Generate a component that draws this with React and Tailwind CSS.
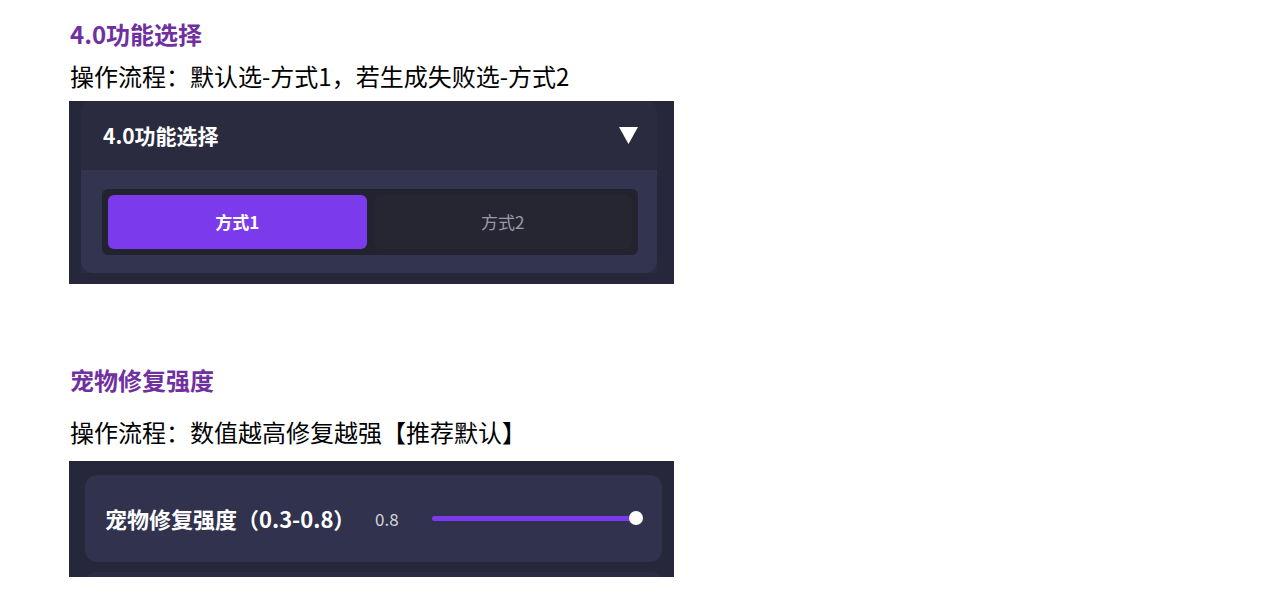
const FONT = { fontFamily: '"Noto Sans CJK SC", "Noto Sans", sans-serif' };

function ModePanel() {
  return (
    <div className="w-[605px] h-[183px] bg-[#26273a] pl-[12px] pr-[17px]">
      <div className="rounded-t-[10px] bg-[#2a2b3f]">
        {/* Header */}
        <div className="h-[69px] flex items-center justify-between pl-[22px] pr-[18px]">
          <span className="text-white text-[21px] font-bold">4.0功能选择</span>
          <svg width="21" height="19" viewBox="0 0 21 19">
            <path d="M1 1 L20 1 L10.5 18 Z" fill="#ffffff" />
          </svg>
        </div>
        {/* Body */}
        <div className="h-[103px] bg-[#33344f] rounded-b-[12px] pt-[19px] pl-[21px] pr-[19px]">
          <div className="bg-[#23232f] rounded-[6px] p-[6px] flex gap-[7px] h-[66px]">
            <button className="flex-1 rounded-[6px] bg-[#7c3aed] text-white text-[17px] font-bold">方式1</button>
            <button className="flex-1 rounded-[6px] bg-[#262633] text-[#9a9aa8] text-[17px]">方式2</button>
          </div>
        </div>
      </div>
    </div>
  );
}

function StrengthPanel() {
  return (
    <div className="w-[605px] h-[116px] bg-[#26273a] pl-[16px] pr-[12px] pt-[14px] overflow-hidden">
      <div className="h-[87px] rounded-[12px] bg-[#31324d] flex items-center pl-[20px] pr-[20px]">
        <span className="text-white text-[22px] font-bold w-[270px]">宠物修复强度（0.3-0.8）</span>
        <span className="text-[#d4d4dc] text-[17px] w-[57px]">0.8</span>
        <div className="relative flex-1 h-[5px] rounded-full bg-[#7c3aed] mr-[6px]">
          <span className="absolute right-[-7px] top-[-5px] w-[14px] h-[14px] rounded-full bg-white" />
        </div>
      </div>
      <div className="mt-[10px] h-[20px] rounded-[12px] bg-[#2c2d45]" />
    </div>
  );
}

export default function App() {
  return (
    <div className="min-h-screen bg-white pl-[69px] pt-[17px] text-black" style={FONT}>
      <h3 className="text-[24px] leading-[34px] font-bold text-[#7030a0] pl-[1px]">4.0功能选择</h3>
      <p className="mt-[8px] text-[24px] leading-[34px] pl-[1px]">操作流程：默认选-方式1，若生成失败选-方式2</p>
      <div className="mt-[8px]">
        <ModePanel />
      </div>

      <h3 className="mt-[79px] text-[24px] leading-[34px] font-bold text-[#7030a0] pl-[1px]">宠物修复强度</h3>
      <p className="mt-[18px] text-[24px] leading-[34px] pl-[1px]">操作流程：数值越高修复越强【推荐默认】</p>
      <div className="mt-[12px]">
        <StrengthPanel />
      </div>
    </div>
  );
}
